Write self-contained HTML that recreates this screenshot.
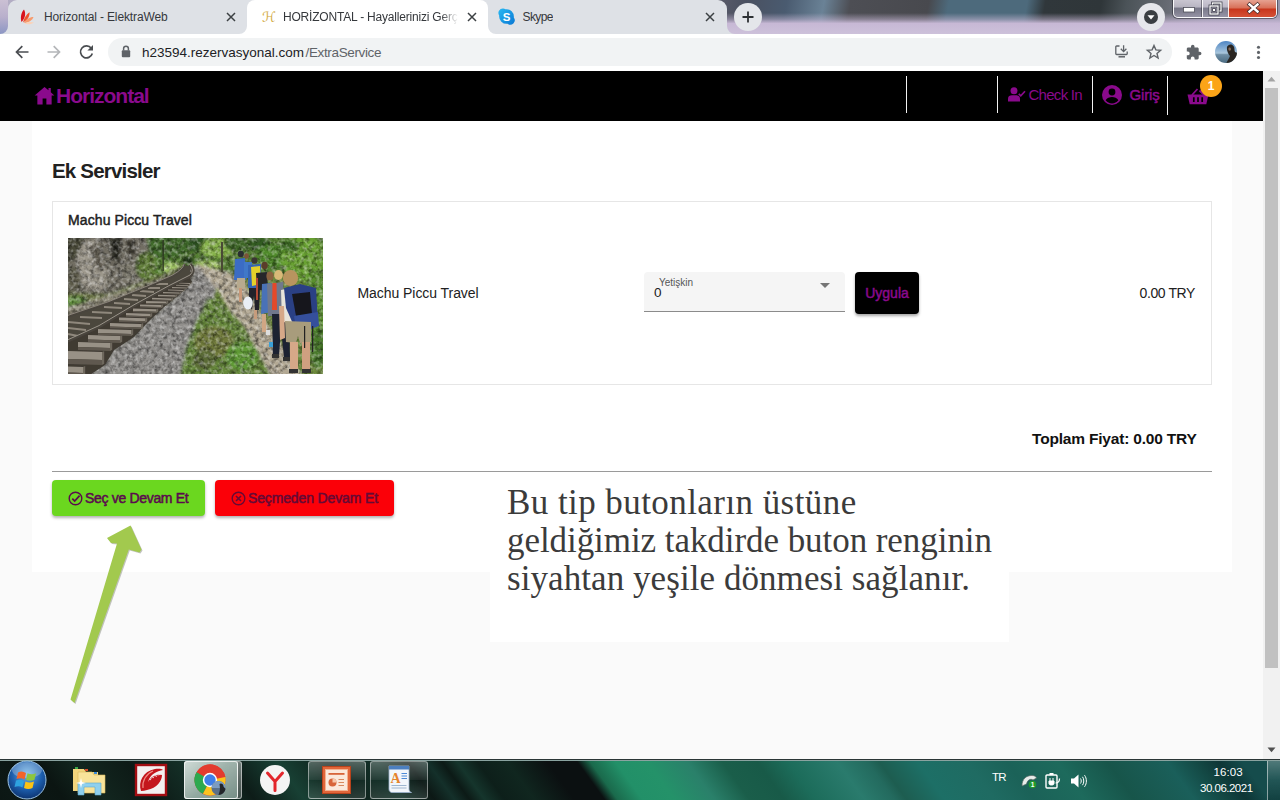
<!DOCTYPE html>
<html lang="tr">
<head>
<meta charset="utf-8">
<title>HORİZONTAL - Hayallerinizi Gerçekleştirin</title>
<style>
*{box-sizing:border-box;margin:0;padding:0}
html,body{width:1280px;height:800px;overflow:hidden;background:#fafafa;font-family:"Liberation Sans",sans-serif;}
.abs{position:absolute}
#screen{position:relative;width:1280px;height:800px;overflow:hidden}
svg{display:block;overflow:visible}
/* ---------- title bar / tabs ---------- */
#titlebar{left:0;top:0;width:1280px;height:34px;background:
 linear-gradient(100deg,#cfc6d6 0px,#b3adc4 8px,#8c86a0 200px,#6f6b80 420px,#5d5d6b 700px,#4a5060 735px,#4a5b70 775px,#6a8296 812px,#4d4e54 838px,#48494e 915px,#4d6a7c 935px,#4d6a7c 1012px,#30373b 1030px,#2f3639 1085px,#4b5358 1110px,#666a72 1150px,#85879a 1190px,#9a98ad 1280px);}
#titleglow{left:0;top:13px;width:1280px;height:21px;background:linear-gradient(180deg,rgba(199,184,213,0) 0,rgba(199,184,213,.5) 30%,rgba(199,184,213,1) 50%,rgba(205,193,218,1) 100%)}
#tl{left:0;top:0;width:8px;height:34px;background:linear-gradient(180deg,#cbc0d4 0,#b9b0cc 50%,#8c96c4 100%)}
#tabstrip{left:8px;top:0;width:719px;height:34px;background:#dee1e6;border-radius:9px 9px 0 0}
.flare{width:8px;height:8px;top:26px}
.tab{top:0;height:34px;white-space:nowrap}
.tab.active{background:#fff;border-radius:8px 8px 0 0}
.tab .t{position:absolute;left:36px;top:10px;font-size:12px;color:#35383c;overflow:hidden}
.tab svg.x{position:absolute;right:11px;top:12px}
#toolbar{left:0;top:34px;width:1280px;height:37px;background:#fff}
#omni{left:108px;top:38px;width:1064px;height:28px;border-radius:14px;background:#f1f3f4}
#url{left:142px;top:45px;font-size:13.5px;color:#202124;white-space:nowrap}
#url span{color:#5f6368;letter-spacing:-.37px;margin-left:1.5px}
/* ---------- page ---------- */
#header{left:0;top:71px;width:1263px;height:50px;background:#000}
.vdiv{top:76px;width:1px;height:37px;background:#f2f2f2}
#brand{left:56px;top:84px;font-size:21px;font-weight:bold;color:#8a0a8c;letter-spacing:-1.0px;white-space:nowrap}
.nav{top:86px;font-size:15px;color:#8a0a8c;white-space:nowrap}
#container{left:32px;top:121px;width:1200px;height:451px;background:#fff}
#h1{left:52px;top:159px;font-size:20.5px;font-weight:bold;color:#212121;letter-spacing:-.8px;white-space:nowrap}
#card{left:52px;top:201px;width:1160px;height:184px;border:1px solid #e6e6e6;background:#fff}
#cardtitle{left:68px;top:212px;font-size:14px;color:#212121;-webkit-text-stroke:.45px #212121;white-space:nowrap;letter-spacing:.1px}
#photo{left:68px;top:238px;width:255px;height:136px;overflow:hidden}
#svcname{left:357.500px;top:285px;font-size:14px;color:#212121;white-space:nowrap;letter-spacing:-.06px}
#select{left:644px;top:272px;width:201px;height:40px;background:#f5f5f5;border-bottom:1px solid #8b8b8b;border-radius:4px 4px 0 0}
#select .lbl{position:absolute;left:15px;top:5px;font-size:10px;color:#555;letter-spacing:.0px}
#select .val{position:absolute;left:10px;top:13px;font-size:13.5px;color:#212121}
#select .car{position:absolute;left:176px;top:11px;width:0;height:0;border-left:5px solid transparent;border-right:5px solid transparent;border-top:5px solid #757575}
#uygula{left:855px;top:272px;width:64px;height:42px;background:#000;border-radius:4px;box-shadow:0 2px 3px rgba(0,0,0,.35);color:#8a0a8c;-webkit-text-stroke:.5px #8a0a8c;font-size:14px;text-align:center;line-height:42px;letter-spacing:0}
#price{left:1139.5px;top:285px;font-size:14px;color:#212121;white-space:nowrap;letter-spacing:-.4px}
#total{left:1032px;top:430px;font-size:15.5px;font-weight:bold;color:#111;white-space:nowrap;letter-spacing:-.19px}
#hr{left:52px;top:471px;width:1160px;height:1px;background:#9a9a9a}
.btn{top:480px;height:36px;border-radius:4px;box-shadow:0 2px 3px rgba(0,0,0,.3);font-size:14px;white-space:nowrap}
#b1{left:52px;width:153px;background:#6bd71f;color:#5b0a4e;-webkit-text-stroke:.5px #5b0a4e}
#b2{left:215px;width:179px;background:#fb0008;color:#650a36;-webkit-text-stroke:.5px #650a36}
.btn span{position:absolute;top:10px}
#note{left:490px;top:480px;width:519px;height:162px;background:#fff}
#notetext{left:507px;top:484px;font-family:"Liberation Serif",serif;font-size:35px;line-height:38px;color:#3b3b3b;white-space:nowrap}
/* scrollbar */
#sb{left:1263px;top:71px;width:17px;height:688px;background:#f1f1f1}
#sbthumb{left:1265px;top:88px;width:13px;height:580px;background:#c1c1c1}
/* ---------- taskbar ---------- */
#taskbar{left:0;top:759px;width:1280px;height:41px;background:#0b1512;overflow:hidden}
#tbg{left:-60px;top:0;width:1400px;height:41px;transform:skewX(36deg);background:linear-gradient(90deg,#0a1310 0px,#0c1815 60px,#0b1512 110px,#12261f 150px,#0d1a16 200px,#153229 260px,#0d1c18 300px,#184034 350px,#0f221c 400px,#123028 450px,#0c1815 480px,#14302a 500px,#0c1a16 515px,#15352c 530px,#0d1f1a 550px,#10261f 580px,#0b1011 620px,#0b1011 650px,#1a6a4c 663px,#229068 688px,#249269 720px,#2a806a 760px,#1a5e4a 795px,#185a48 830px,#1c6c5a 860px,#2a7b6d 910px,#236a5e 940px,#1d5d50 952px,#1d6f66 990px,#1f6b62 1040px,#1b6258 1080px,#1d6a5c 1130px,#17554a 1180px,#195a52 1210px,#1a5f5a 1240px,#134844 1270px,#0e3636 1292px,#154c4c 1315px,#154c4c 1400px)}
#tbtop{left:0;top:759px;width:1280px;height:2px;background:linear-gradient(180deg,#2b3636 0,#2b3636 50%,#8aa3a0 50%,#8aa3a0 100%)}
.tbbtn{top:761px;height:38px;border-radius:3px;border:1px solid rgba(255,255,255,.45);background:linear-gradient(180deg,rgba(255,255,255,.28),rgba(255,255,255,.08) 50%,rgba(255,255,255,.02) 51%,rgba(255,255,255,.12))}
.tray{color:#fff;font-size:12px;white-space:nowrap}
</style>
</head>
<body>
<div id="screen">

<!-- TITLE BAR -->
<div id="titlebar" class="abs"></div>
<div id="titleglow" class="abs"></div>
<div id="tl" class="abs"></div>
<div id="tabstrip" class="abs"></div>
<svg class="abs flare" style="left:0px" viewBox="0 0 8 8"><path d="M8 0V8H0A8 8 0 0 0 8 0Z" fill="#dee1e6"/></svg>
<svg class="abs flare" style="left:727px" viewBox="0 0 8 8"><path d="M0 0V8H8A8 8 0 0 1 0 0Z" fill="#dee1e6"/></svg>

<div class="tab abs" style="left:8px;width:239px">
 <svg class="abs" style="left:12px;top:9px" width="15" height="16" viewBox="0 0 15 16"><path d="M1.500 13C0 8 1.500 3 4 0.500C6 4 5.500 9 1.500 13Z" fill="#d8121c"/><path d="M3 13.500C4 9 6.500 5 9.500 3.200C10 7 7.500 11 3 13.500Z" fill="#f0522e"/><path d="M4 14C6 10.500 9.500 8 13.500 8C12.500 11 9 13.500 4 14Z" fill="#f79a6c"/><path d="M4.500 14.500C7 12.800 11 12.500 14 13.500C11.500 15.500 7.500 15.800 4.500 14.500Z" fill="#fbd2b8"/></svg>
 <span class="t" style="letter-spacing:-.13px">Horizontal - ElektraWeb</span>
 <svg class="x" width="10" height="10" viewBox="0 0 10 10"><path d="M1 1L9 9M9 1L1 9" stroke="#3c4043" stroke-width="1.500" fill="none"/></svg>
</div>
<div class="tab active abs" style="left:247px;width:241px">
 <span class="abs" style="left:15px;top:8px;font-family:'DejaVu Sans','Liberation Serif',serif;font-size:14px;color:#d2a93c;line-height:18px">ℋ</span>
 <span class="t" style="width:175px;letter-spacing:-.2px;-webkit-mask-image:linear-gradient(90deg,#000 0,#000 158px,transparent 175px);mask-image:linear-gradient(90deg,#000 0,#000 158px,transparent 175px)">HORİZONTAL - Hayallerinizi Gerçekleştirin</span>
 <svg class="x" width="10" height="10" viewBox="0 0 10 10"><path d="M1 1L9 9M9 1L1 9" stroke="#3c4043" stroke-width="1.500" fill="none"/></svg>
</div>
<svg class="abs flare" style="left:239px" viewBox="0 0 8 8"><path d="M8 0V8H0A8 8 0 0 0 8 0Z" fill="#fff"/></svg>
<svg class="abs flare" style="left:488px" viewBox="0 0 8 8"><path d="M0 0V8H8A8 8 0 0 1 0 0Z" fill="#fff"/></svg>
<div class="tab abs" style="left:488px;width:238px">
 <svg class="abs" style="left:10px;top:8px" width="17" height="17" viewBox="0 0 17 17"><defs><linearGradient id="sk" x1="0" y1="0" x2="1" y2="1"><stop offset="0" stop-color="#28b8f2"/><stop offset="1" stop-color="#0a78d4"/></linearGradient></defs><path d="M5 0.500A4.500 4.500 0 0 1 7.500 1.200A7.500 7.500 0 0 1 15.800 9.500A4.500 4.500 0 0 1 9.500 15.800A7.500 7.500 0 0 1 1.200 7.500A4.500 4.500 0 0 1 5 0.500Z" fill="url(#sk)"/><text x="8.500" y="12.600" font-family="Liberation Sans, sans-serif" font-weight="bold" font-size="11.500" fill="#fff" text-anchor="middle">S</text></svg>
 <span class="t" style="left:34.5px;letter-spacing:-.6px">Skype</span>
 <svg class="x" width="10" height="10" viewBox="0 0 10 10"><path d="M1 1L9 9M9 1L1 9" stroke="#3c4043" stroke-width="1.500" fill="none"/></svg>
</div>
<!-- new tab button -->
<div class="abs" style="left:734px;top:3px;width:28px;height:28px;border-radius:14px;background:#e4e6ea"></div>
<svg class="abs" style="left:742px;top:11px" width="12" height="12" viewBox="0 0 12 12"><path d="M6 0.500V11.500M0.500 6H11.500" stroke="#2d3033" stroke-width="1.800" fill="none"/></svg>
<!-- tab search -->
<div class="abs" style="left:1137px;top:3px;width:28px;height:28px;border-radius:14px;background:#e6e7eb"></div>
<div class="abs" style="left:1144px;top:10px;width:14px;height:14px;border-radius:7px;background:#3a3e42"></div>
<svg class="abs" style="left:1147px;top:15px" width="8" height="5" viewBox="0 0 8 5"><path d="M0.500 0.300H7.500L4 4.600Z" fill="#fff"/></svg>
<!-- window controls -->
<div class="abs" style="left:1173px;top:-2px;width:104px;height:20px;border:1px solid rgba(255,255,255,.9);border-radius:0 0 5px 5px;box-shadow:0 0 0 1px rgba(40,40,50,.55);overflow:hidden;background:linear-gradient(180deg,rgba(220,215,225,.85) 0,rgba(200,195,208,.8) 45%,rgba(120,118,135,.75) 50%,rgba(150,148,165,.8) 100%)">
 <div class="abs" style="left:28px;top:0;width:1px;height:20px;background:rgba(255,255,255,.9);box-shadow:-1px 0 0 rgba(40,40,50,.5)"></div>
 <div class="abs" style="left:54px;top:0;width:50px;height:20px;background:linear-gradient(180deg,#e8a898 0,#d87058 45%,#c8361c 50%,#d8583c 100%);border-left:1px solid rgba(255,255,255,.9)"></div>
</div>
<svg class="abs" style="left:1183px;top:7px" width="12" height="6" viewBox="0 0 12 6"><rect x="0.500" y="0.500" width="11" height="4.500" fill="#fff" stroke="#50505a" stroke-width=".8"/></svg>
<svg class="abs" style="left:1209px;top:2px" width="13" height="13" viewBox="0 0 13 13"><rect x="3.500" y="1" width="8.500" height="8" fill="none" stroke="#3c3c48" stroke-width="2.800"/><rect x="3.500" y="1" width="8.500" height="8" fill="none" stroke="#fff" stroke-width="1.300"/><rect x="1" y="4" width="8" height="8" fill="#a9a5b8" stroke="#3c3c48" stroke-width="2.800"/><rect x="1" y="4" width="8" height="8" fill="none" stroke="#fff" stroke-width="1.300"/><rect x="3.600" y="6.600" width="2.800" height="2.800" fill="#fff" stroke="#3c3c48" stroke-width=".8"/></svg>
<svg class="abs" style="left:1247px;top:3px" width="13" height="10" viewBox="0 0 13 10"><path d="M2.500 1.500L10.500 8.500M10.500 1.500L2.500 8.500" stroke="#4a3030" stroke-width="4" stroke-linecap="square"/><path d="M2.500 1.500L10.500 8.500M10.500 1.500L2.500 8.500" stroke="#fff" stroke-width="2.400" stroke-linecap="square"/></svg>

<div id="toolbar" class="abs"></div>
<div id="omni" class="abs"></div>
<!-- nav icons -->
<svg class="abs" style="left:15px;top:45px" width="14" height="14" viewBox="0 0 14 14"><path d="M13.500 7H1.800M7.300 1.200L1.500 7L7.300 12.800" stroke="#4a4d51" stroke-width="1.700" fill="none"/></svg>
<svg class="abs" style="left:47px;top:45px" width="14" height="14" viewBox="0 0 14 14"><path d="M0.500 7H12.200M6.700 1.200L12.500 7L6.700 12.800" stroke="#b4b6b9" stroke-width="1.700" fill="none"/></svg>
<svg class="abs" style="left:79px;top:44px" width="15" height="16" viewBox="0 0 15 16"><path d="M12.300 4.200A6 6 0 1 0 13.300 9.500" stroke="#4a4d51" stroke-width="1.700" fill="none"/><path d="M14 1V6.600H8.400Z" fill="#4a4d51"/></svg>
<svg class="abs" style="left:121px;top:45px" width="10" height="13" viewBox="0 0 10 13"><path d="M2.600 5.500V3.600A2.400 2.400 0 0 1 7.400 3.600V5.500" stroke="#5f6368" stroke-width="1.500" fill="none"/><rect x="0.800" y="5.200" width="8.400" height="7" rx="1" fill="#5f6368"/></svg>
<div id="url" class="abs">h23594.rezervasyonal.com<span>/ExtraService</span></div>
<!-- install -->
<svg class="abs" style="left:1115px;top:45px" width="14" height="13" viewBox="0 0 14 13"><path d="M4.500 1H1.600A.8 .8 0 0 0 .8 1.800V8.700A.8 .8 0 0 0 1.600 9.500H11.400A.8 .8 0 0 0 12.200 8.700V6.500" stroke="#5f6368" stroke-width="1.300" fill="none"/><path d="M3.500 11.800H10" stroke="#5f6368" stroke-width="1.500"/><path d="M8.600 0.300V6.200M5.800 3.800L8.600 6.600L11.400 3.800" stroke="#5f6368" stroke-width="1.300" fill="none"/></svg>
<!-- star -->
<svg class="abs" style="left:1146px;top:44px" width="16" height="15" viewBox="0 0 16 15"><path d="M8 1.600L9.900 5.900L14.600 6.300L11 9.400L12.100 14L8 11.500L3.900 14L5 9.400L1.400 6.300L6.100 5.900Z" stroke="#5f6368" stroke-width="1.400" fill="none" stroke-linejoin="miter"/></svg>
<!-- puzzle -->
<svg class="abs" style="left:1186px;top:44px" width="16" height="16" viewBox="0 0 16 16"><path d="M13.700 7.700H12.700V4.900C12.700 4.100 12.100 3.500 11.300 3.500H8.500V2.500A1.750 1.750 0 0 0 5 2.500V3.500H2.200C1.400 3.500 0.800 4.100 0.800 4.900V7.500H1.800A1.900 1.900 0 0 1 1.800 11.300H0.800V14C0.800 14.800 1.400 15.400 2.200 15.400H4.800V14.400A1.900 1.900 0 0 1 8.600 14.400V15.400H11.300C12.100 15.400 12.700 14.800 12.700 14V11.200H13.700A1.750 1.750 0 0 0 13.700 7.700Z" fill="#5f6368"/></svg>
<!-- avatar -->
<svg class="abs" style="left:1215px;top:41px" width="22" height="22" viewBox="0 0 22 22"><defs><clipPath id="av"><circle cx="11" cy="11" r="11"/></clipPath><linearGradient id="avg" x1="0" y1="0" x2="0" y2="1"><stop offset="0" stop-color="#4f86c4"/><stop offset=".55" stop-color="#a9c6dc"/><stop offset=".62" stop-color="#6f8fa6"/><stop offset="1" stop-color="#4a6a80"/></linearGradient></defs><g clip-path="url(#av)"><rect width="22" height="22" fill="url(#avg)"/><path d="M12 6C13 3 17 2.500 18.500 5C20 7 19 9 20 11L23 12V23H11C12 20 14 18 15 15C13 13 11.500 9 12 6Z" fill="#2a2622"/><path d="M13.500 7C14.500 6 16 6.500 16 8.500C15.500 10 14 10 13.500 9Z" fill="#8a6a54"/></g></svg>
<!-- menu dots -->
<svg class="abs" style="left:1256px;top:45px" width="5" height="15" viewBox="0 0 5 15"><circle cx="2.500" cy="2.300" r="1.550" fill="#5f6368"/><circle cx="2.500" cy="7.400" r="1.550" fill="#5f6368"/><circle cx="2.500" cy="12.500" r="1.550" fill="#5f6368"/></svg>

<!-- PAGE -->
<div id="header" class="abs"></div>
<div class="vdiv abs" style="left:906px"></div>
<div class="vdiv abs" style="left:997px"></div>
<div class="vdiv abs" style="left:1092px"></div>
<div class="vdiv abs" style="left:1167px;height:39px"></div>
<svg class="abs" style="left:33.500px;top:86px" width="21" height="19" viewBox="0 0 20 18"><path d="M10 0.800L0.600 9H3.200V17.500H8.200V11.800H11.800V17.500H16.800V9H19.400L16 6V1.800H13.800V4.100Z" fill="#8a0a8c"/></svg>
<div id="brand" class="abs">Horizontal</div>
<svg class="abs" style="left:1008px;top:87px" width="18" height="15" viewBox="0 0 18 15"><circle cx="6" cy="3.800" r="3.500" fill="#8a0a8c"/><path d="M0 14.500V11.500C0 9.300 1.800 8.300 4 8.300H8C10.200 8.300 12 9.300 12 11.500V14.500Z" fill="#8a0a8c"/><path d="M10.800 6.800L12.800 8.800L17 4.200" stroke="#8a0a8c" stroke-width="1.700" fill="none"/></svg>
<div class="nav abs" style="left:1028.500px;letter-spacing:-.72px">Check In</div>
<svg class="abs" style="left:1102px;top:85px" width="20" height="20" viewBox="0 0 20 20"><circle cx="10" cy="10" r="10" fill="#8a0a8c"/><circle cx="10" cy="7" r="3.400" fill="#000"/><path d="M3.600 15.200C5 12.800 7.400 12 10 12C12.600 12 15 12.800 16.400 15.200A7.900 7.900 0 0 1 3.600 15.200Z" fill="#000"/></svg>
<div class="nav abs" style="left:1129.500px;-webkit-text-stroke:.5px #8a0a8c;letter-spacing:-.17px">Giriş</div>
<svg class="abs" style="left:1187px;top:88px" width="22" height="17" viewBox="0 0 22 17"><path d="M0.500 6.500H21.500L19.300 16.200H2.700Z" fill="#8a0a8c"/><path d="M5 7L10.500 1M17 7L12.500 2.500" stroke="#8a0a8c" stroke-width="1.800" fill="none"/><path d="M6.800 9.300V14M11 9.300V14M15.200 9.300V14" stroke="#000" stroke-width="1.700"/></svg>
<div class="abs" style="left:1200px;top:75px;width:22px;height:22px;border-radius:11px;background:#fba418;color:#fff;font-size:12px;font-weight:bold;text-align:center;line-height:22px">1</div>

<div id="container" class="abs"></div>
<div id="h1" class="abs">Ek Servisler</div>
<div id="card" class="abs"></div>
<div id="cardtitle" class="abs">Machu Piccu Travel</div>
<div id="photo" class="abs">
<svg width="255" height="136" viewBox="0 0 255 136" style="display:block">
<defs>
<filter id="pb" x="-5%" y="-5%" width="110%" height="110%"><feGaussianBlur stdDeviation="0.7"/></filter>
<filter id="pb2" x="-10%" y="-10%" width="120%" height="120%"><feGaussianBlur stdDeviation="1.6"/></filter>
<filter id="nz" x="0" y="0" width="100%" height="100%"><feTurbulence type="fractalNoise" baseFrequency="0.22" numOctaves="3" seed="7" result="n"/><feColorMatrix type="matrix" values="0 0 0 0 0  0 0 0 0 0  0 0 0 0 0  2.2 0 0 0 -0.9"/></filter>
<filter id="nzw" x="0" y="0" width="100%" height="100%"><feTurbulence type="fractalNoise" baseFrequency="0.25" numOctaves="3" seed="23" result="n"/><feColorMatrix type="matrix" values="0 0 0 0 1  0 0 0 0 1  0 0 0 0 1  0 2.2 0 0 -0.95"/></filter>
<clipPath id="pc"><rect width="255" height="136"/></clipPath>
</defs>
<g clip-path="url(#pc)">
<rect width="255" height="136" fill="#6d8a3c"/>
<g filter="url(#pb2)">
 <!-- foliage -->
 <rect x="60" y="-4" width="200" height="40" fill="#557f30"/><ellipse cx="128" cy="6" rx="12" ry="8" fill="#2f5522"/><ellipse cx="190" cy="6" rx="12" ry="7" fill="#335c24"/>
 <ellipse cx="100" cy="8" rx="22" ry="12" fill="#3f6a2a"/>
 <ellipse cx="150" cy="10" rx="18" ry="10" fill="#86b24a"/>
 <ellipse cx="170" cy="6" rx="14" ry="8" fill="#3e6628"/>
 <ellipse cx="205" cy="18" rx="16" ry="12" fill="#4f8a2c"/>
 <ellipse cx="235" cy="20" rx="22" ry="24" fill="#69a232"/><ellipse cx="222" cy="8" rx="10" ry="6" fill="#3f6f28"/>
 <ellipse cx="247" cy="70" rx="12" ry="40" fill="#5a902e"/><ellipse cx="250" cy="110" rx="8" ry="20" fill="#4a7a2a"/>
 <ellipse cx="120" cy="22" rx="6" ry="4" fill="#23381c"/>
 <ellipse cx="104" cy="30" rx="10" ry="5" fill="#a9cf6a"/>
 <ellipse cx="140" cy="28" rx="14" ry="5" fill="#9fbf62"/>
 <!-- rock -->
 <polygon points="-4,-4 78,-4 84,30 78,44 40,60 -4,70" fill="#726e63"/>
 <polygon points="8,6 28,2 40,38 34,54 14,48" fill="#9c978b"/><polygon points="22,8 30,6 36,30 30,34" fill="#5e5a50"/><polygon points="0,28 10,30 14,50 0,54" fill="#5b5a48"/>
 <polygon points="40,0 54,0 52,24 44,22" fill="#2f2d26"/>
 <polygon points="58,2 68,2 66,18 60,16" fill="#3d3a32"/>
 <polygon points="-2,-2 18,-2 8,20 -2,26" fill="#4a4a38"/>
 <polygon points="54,24 66,26 70,44 56,44" fill="#7a776b"/>
 <ellipse cx="78" cy="28" rx="10" ry="14" fill="#5d7a36"/>
 <!-- left ground -->
 <polygon points="-4,54 40,56 90,38 116,26 112,38 40,66 -4,82" fill="#6f7a4c"/>
 <ellipse cx="8" cy="66" rx="12" ry="8" fill="#5e8c3a"/>
 <polygon points="-4,70 60,52 100,38 100,44 -4,84" fill="#8f8a78"/>
 <!-- gravel -->
 <polygon points="122,28 132,28 150,44 146,60 130,84 120,110 114,140 16,140 36,126 45,112 64,100 78,85 95,70 110,58 122,44 127,34" fill="#918f8c"/>
 <!-- dirt path -->
 <polygon points="128,26 160,34 176,44 196,80 236,140 186,140 170,100 160,70 150,52" fill="#b3a994"/>
 <!-- grass island -->
 <polygon points="140,60 152,62 176,88 204,140 112,140 118,110 128,84" fill="#66883a"/>
 <ellipse cx="146" cy="104" rx="20" ry="16" fill="#6f7a3a"/><ellipse cx="136" cy="122" rx="12" ry="10" fill="#5a6a34"/>
 <ellipse cx="174" cy="118" rx="16" ry="14" fill="#5f9a34"/>
 <!-- track bed -->
 <polygon points="-4,78 41,64 80,48 104,38 116,28 124,28 127,34 122,44 110,58 95,70 78,85 64,100 45,112 36,126 16,140 -4,140" fill="#4f4a41"/>
</g>
<rect width="255" height="136" filter="url(#nz)" opacity=".55"/>
<rect width="255" height="136" filter="url(#nzw)" opacity=".45"/>
<g filter="url(#pb)">
 <!-- sleepers -->
 <polygon points="-4,104 31,89 66,68 101,48.7 122,40 124,44 112,56 96,69 80,84 66,99 46,112 37,127 17,140 -4,140" fill="#3f3a33"/>
 <polygon points="0,113 34,114.0 34,122.0 0,121" fill="#989186"/>
 <polygon points="0,121 34,122.0 34,127.0 0,126" fill="#5f594f"/>
 <polygon points="34,114.0 36.2,113.2 36.2,125.8 34,127.0" fill="#6e685d"/>
 <polygon points="0,128.5 15,128.9 15,134.9 0,134.5" fill="#989186"/>
 <polygon points="0,134.5 15,134.9 15,137.4 0,137" fill="#5f594f"/>
 <polygon points="15,128.9 17.2,128.1 17.2,136.2 15,137.4" fill="#6e685d"/>
 <polygon points="10,104 42,105.0 42,110.0 10,109" fill="#989186"/>
 <polygon points="10,109 42,110.0 42,113.0 10,112" fill="#5f594f"/>
 <polygon points="42,105.0 44.2,104.2 44.2,111.8 42,113.0" fill="#6e685d"/>
 <polygon points="20,97 52,98.0 52,102.5 20,101.5" fill="#989186"/>
 <polygon points="20,101.5 52,102.5 52,105.0 20,104" fill="#5f594f"/>
 <polygon points="52,98.0 54.2,97.2 54.2,103.8 52,105.0" fill="#6e685d"/>
 <polygon points="30,91 63,92.0 63,96.0 30,95" fill="#989186"/>
 <polygon points="30,95 63,96.0 63,98.0 30,97" fill="#5f594f"/>
 <polygon points="63,92.0 65.2,91.2 65.2,96.8 63,98.0" fill="#6e685d"/>
 <polygon points="42,85 73,85.9 73,89.4 42,88.5" fill="#989186"/>
 <polygon points="42,88.5 73,89.4 73,91.1 42,90.2" fill="#5f594f"/>
 <polygon points="73,85.9 75.2,85.1 75.2,89.9 73,91.1" fill="#6e685d"/>
 <polygon points="51,79.5 77,80.3 77,83.3 51,82.5" fill="#989186"/>
 <polygon points="51,82.5 77,83.3 77,84.8 51,84" fill="#5f594f"/>
 <polygon points="77,80.3 79.2,79.5 79.2,83.6 77,84.8" fill="#6e685d"/>
 <polygon points="58,75 82,75.7 82,78.2 58,77.5" fill="#989186"/>
 <polygon points="58,77.5 82,78.2 82,79.5 58,78.8" fill="#5f594f"/>
 <polygon points="82,75.7 84.2,74.9 84.2,78.3 82,79.5" fill="#6e685d"/>
 <polygon points="65,70.5 88,71.2 88,73.7 65,73" fill="#989186"/>
 <polygon points="65,73 88,73.7 88,74.9 65,74.2" fill="#5f594f"/>
 <polygon points="88,71.2 90.2,70.4 90.2,73.7 88,74.9" fill="#6e685d"/>
 <polygon points="72,66.5 93,67.1 93,69.1 72,68.5" fill="#989186"/>
 <polygon points="72,68.5 93,69.1 93,70.2 72,69.6" fill="#5f594f"/>
 <polygon points="93,67.1 95.2,66.3 95.2,69.0 93,70.2" fill="#6e685d"/>
 <polygon points="78,63 98,63.6 98,65.6 78,65" fill="#989186"/>
 <polygon points="78,65 98,65.6 98,66.5 78,65.9" fill="#5f594f"/>
 <polygon points="98,63.6 100.2,62.8 100.2,65.3 98,66.5" fill="#6e685d"/>
 <polygon points="84,59.8 103,60.4 103,62.1 84,61.5" fill="#989186"/>
 <polygon points="84,61.5 103,62.1 103,62.9 84,62.3" fill="#5f594f"/>
 <polygon points="103,60.4 105.2,59.6 105.2,61.7 103,62.9" fill="#6e685d"/>
 <polygon points="90,56.8 107,57.3 107,58.8 90,58.3" fill="#989186"/>
 <polygon points="90,58.3 107,58.8 107,59.5 90,59" fill="#5f594f"/>
 <polygon points="107,57.3 109.2,56.5 109.2,58.3 107,59.5" fill="#6e685d"/>
 <polygon points="95,54 111,54.5 111,55.8 95,55.3" fill="#989186"/>
 <polygon points="95,55.3 111,55.8 111,56.4 95,55.9" fill="#5f594f"/>
 <polygon points="111,54.5 113.2,53.7 113.2,55.2 111,56.4" fill="#6e685d"/>
 <polygon points="100,51.5 115,52.0 115,53.1 100,52.6" fill="#989186"/>
 <polygon points="100,52.6 115,53.1 115,53.6 100,53.1" fill="#5f594f"/>
 <polygon points="115,52.0 117.2,51.2 117.2,52.4 115,53.6" fill="#6e685d"/>
 <polygon points="104,49 118,49.4 118,50.4 104,50" fill="#989186"/>
 <polygon points="104,50 118,50.4 118,50.9 104,50.5" fill="#5f594f"/>
 <polygon points="118,49.4 120.2,48.6 120.2,49.7 118,50.9" fill="#6e685d"/>
 <polygon points="108,46.8 120,47.2 120,48.1 108,47.7" fill="#989186"/>
 <polygon points="108,47.7 120,48.1 120,48.5 108,48.1" fill="#5f594f"/>
 <polygon points="120,47.2 122.2,46.4 122.2,47.3 120,48.5" fill="#6e685d"/>
 <polygon points="111,44.8 122,45.1 122,45.9 111,45.6" fill="#989186"/>
 <polygon points="111,45.6 122,45.9 122,46.3 111,46" fill="#5f594f"/>
 <polygon points="122,45.1 124.2,44.3 124.2,45.1 122,46.3" fill="#6e685d"/>
 <polygon points="-2,79 41,64.500 80,48.700 104,38.300 116,28 122,28 122,38 101,48.700 66,68 31,89 -2,104" fill="#4b463e"/>
 <!-- ties between rails -->
 <g stroke="#8f887c" stroke-width="2">
 <line x1="0" y1="84" x2="22" y2="86"/><line x1="0" y1="90" x2="18" y2="92"/><line x1="0" y1="96" x2="10" y2="98"/>
 <line x1="12" y1="79" x2="34" y2="80"/><line x1="24" y1="74" x2="44" y2="75"/><line x1="36" y1="69" x2="54" y2="70"/>
 <line x1="46" y1="65" x2="62" y2="66"/><line x1="56" y1="61" x2="70" y2="62"/><line x1="64" y1="57" x2="78" y2="58"/>
 <line x1="72" y1="53" x2="86" y2="54"/><line x1="80" y1="50" x2="92" y2="50"/><line x1="88" y1="46" x2="100" y2="46"/>
 </g>
 <!-- rails -->
 <path d="M-2,79 L41,64.5 L80,48.7 L104,38.3 Q116,32 116.5,26" fill="none" stroke="#4a443c" stroke-width="2.4"/>
 <path d="M-2,78 L41,63.5 L80,47.7 L104,37.3 Q115.5,31 116,26" fill="none" stroke="#9a948a" stroke-width=".8"/>
 <path d="M-2,104 L31,89 L66,68 L101,48.7 L122,38 Q128,33 122,26" fill="none" stroke="#4a443c" stroke-width="3"/>
 <path d="M-2,102.6 L31,87.6 L66,66.8 L101,47.6 L122,37 Q127,32.5 121.5,26" fill="none" stroke="#a39d92" stroke-width=".9"/>
 <!-- lamp post / tree trunk -->
 <rect x="94.5" y="2" width="1.3" height="31" fill="#2c3322"/>
 <rect x="153" y="4" width="2" height="30" fill="#4a4a36"/>
 <!-- hikers -->
 <g>
 <!-- 1 -->
 <ellipse cx="172.8" cy="16" rx="3" ry="3.2" fill="#2a2e33"/>
 <polygon points="167,21 177,20 178,42 166,42" fill="#3a6cc4"/>
 <rect x="169" y="40" width="8" height="11" fill="#b7aa8e"/>
 <rect x="171" y="50" width="3" height="14" fill="#c89878"/>
 <!-- 2 -->
 <ellipse cx="178.5" cy="18" rx="2.4" ry="2.8" fill="#7a5238"/>
 <polygon points="176,24 184,24 184,40 176,40" fill="#3f78c8"/>
 <!-- 3 -->
 <ellipse cx="186.5" cy="22.5" rx="3" ry="3.2" fill="#3b3532"/>
 <polygon points="180,27 193,26 193,50 180,50" fill="#3565b6"/>
 <polygon points="183,29 192,28 193,46 184,48" fill="#e4d02c"/>
 <polygon points="181,50 192,50 191,72 187,72 186,58 184,72 181,66" fill="#22242a"/>
 <ellipse cx="180" cy="65" rx="4.8" ry="6.5" fill="#e9eef5"/>
 <rect x="186" y="72" width="3" height="9" fill="#c79c7c"/>
 <!-- 4 -->
 <ellipse cx="196.6" cy="27.5" rx="3.2" ry="3.8" fill="#5a3e2c"/>
 <polygon points="188,35 199,34 200,52 189,52" fill="#26262c"/>
 <polygon points="188,40 190,40 190,62 188,62" fill="#b24a34"/>
 <!-- 5 -->
 <ellipse cx="202" cy="38" rx="3.6" ry="4.5" fill="#8a6240"/>
 <polygon points="194,46 203,45 204,74 193,76" fill="#4a72b8"/>
 <rect x="194" y="76" width="4" height="18" fill="#d0a684"/>
 <!-- 6 -->
 <ellipse cx="210.5" cy="37" rx="4.4" ry="5" fill="#d9b978"/>
 <polygon points="199,46 215,44 217,78 200,78" fill="#70788c"/>
 <polygon points="204.500,45 208.500,45 209,72 204,72" fill="#e4482a"/>
 <polygon points="204,76 221,76 222,120 216,120 213,90 211,118 205,118" fill="#1f2430"/>
 <!-- 7 -->
 <ellipse cx="222.500" cy="40" rx="7.600" ry="8" fill="#b8945e"/>
 <polygon points="213,52 232,48 236,86 214,84" fill="#e8e4da"/>
 <polygon points="216,50 232,46 248,50 250,84 240,90 226,88 218,70" fill="#2c3f84"/>
 <polygon points="224,56 242,54 244,76 228,78" fill="#16181e"/>
 <polygon points="226,78 250,74 251,88 240,92 228,90" fill="#34509c"/>
 <polygon points="217,83 243,84 243,104 232,105 230,98 228,105 218,104" fill="#a89c7c"/>
 <rect x="222" y="104" width="8" height="29" fill="#d6a888"/>
 <rect x="234" y="104" width="8" height="29" fill="#cfa080"/>
 <polygon points="211,68 216,68 217,100 212,102" fill="#d6a888"/>
 <rect x="244" y="88" width="1.200" height="26" fill="#222"/>
 <rect x="236" y="88" width="1.200" height="22" fill="#222"/>
 <rect x="221" y="131" width="9" height="4" fill="#333"/><rect x="234" y="131" width="9" height="4" fill="#333"/>
 <rect x="204" y="116" width="7" height="4" fill="#333"/><rect x="215" y="119" width="7" height="4" fill="#333"/>
 <rect x="198" y="92" width="4" height="5" fill="#ddd"/><rect x="201" y="104" width="4" height="5" fill="#3aa0d8"/>
 </g>
</g>
</g>
</svg>
</div>
<div id="svcname" class="abs">Machu Piccu Travel</div>
<div id="select" class="abs"><span class="lbl">Yetişkin</span><span class="val">0</span><span class="car"></span></div>
<div id="uygula" class="abs">Uygula</div>
<div id="price" class="abs">0.00 TRY</div>
<div id="total" class="abs">Toplam Fiyat: 0.00 TRY</div>
<div id="hr" class="abs"></div>
<div id="b1" class="btn abs"><svg class="abs" style="left:16px;top:11px" width="15" height="15" viewBox="0 0 15 15"><circle cx="7.500" cy="7.500" r="6.300" stroke="#5b0a4e" stroke-width="1.400" fill="none"/><path d="M4.300 7.600L6.700 10L11.600 4.600" stroke="#5b0a4e" stroke-width="1.700" fill="none"/></svg><span style="left:33px;letter-spacing:-.32px">Seç ve Devam Et</span></div>
<div id="b2" class="btn abs"><svg class="abs" style="left:15.500px;top:11px" width="15" height="15" viewBox="0 0 15 15"><circle cx="7.500" cy="7.500" r="6.300" stroke="#650a36" stroke-width="1.400" fill="none"/><path d="M5 5L10 10M10 5L5 10" stroke="#650a36" stroke-width="1.600" fill="none"/></svg><span style="left:33px;letter-spacing:-.14px">Seçmeden Devam Et</span></div>

<div id="note" class="abs"></div>
<div id="notetext" class="abs"><span style="letter-spacing:.43px">Bu tip butonların üstüne</span><br><span style="letter-spacing:-.06px">geldiğimiz takdirde buton renginin</span><br><span style="letter-spacing:.07px">siyahtan yeşile dönmesi sağlanır.</span></div>

<!-- arrow -->
<svg class="abs" style="left:0;top:0" width="1280" height="800" viewBox="0 0 1280 800"><path d="M131.500 526.500L142.500 550.500L140.500 553.500L129.800 550.500L75.500 704L71.500 700.500L118 544.500L112 544L108 539Z" fill="#8f9488" opacity=".55"/><path d="M130.500 525.500L141.500 549.500L139.500 552.500L128.800 549.500L74.500 703L70.500 699.500L117 543.500L111 543L107 538Z" fill="#a2c94e"/></svg>

<div id="sb" class="abs"></div>
<div id="sbthumb" class="abs"></div>
<svg class="abs" style="left:1267px;top:76px" width="9" height="6" viewBox="0 0 9 6"><path d="M0.500 5.500L4.500 0.800L8.500 5.500Z" fill="#a3a3a3"/></svg>
<svg class="abs" style="left:1267px;top:747px" width="9" height="6" viewBox="0 0 9 6"><path d="M0.500 0.500L4.500 5.200L8.500 0.500Z" fill="#505050"/></svg>

<!-- TASKBAR -->
<div id="taskbar" class="abs"><div id="tbg" class="abs"></div></div>
<div id="tbtop" class="abs"></div>
<!-- start orb -->
<svg class="abs" style="left:6px;top:760px" width="42" height="40" viewBox="0 0 42 40"><defs><radialGradient id="orb" cx=".5" cy=".35" r=".7"><stop offset="0" stop-color="#6fb4e8"/><stop offset=".55" stop-color="#1d5fae"/><stop offset="1" stop-color="#0a2c66"/></radialGradient></defs><circle cx="21" cy="20" r="19" fill="url(#orb)" stroke="#9cc4e4" stroke-width="1"/><ellipse cx="21" cy="10" rx="15" ry="8" fill="#fff" opacity=".25"/><path d="M12 12.500C15 11 17.500 11.500 20 13L18.500 19.500C16 18 13.500 17.800 10.500 19Z" fill="#f2642a"/><path d="M21.500 13.200C24 14.500 27 14.800 30 13.200L28.500 19.800C25.500 21.200 22.500 21 20 19.800Z" fill="#8cc63e"/><path d="M10 20.500C13 19.300 15.500 19.500 18 21L16.500 27.500C14 26 11.500 26 8.500 27Z" fill="#2ea3e0"/><path d="M19.500 21.500C22 22.800 25 23 28 21.500L26.500 28C23.500 29.500 20.500 29.200 18 28Z" fill="#fbc314"/></svg>
<!-- explorer -->
<svg class="abs" style="left:72px;top:765px" width="34" height="32" viewBox="0 0 34 32"><path d="M1 4H12L14 7H26V26H1Z" fill="#f2d57c"/><path d="M6 7H20L22 10H33V28H6Z" fill="#f8e39a" stroke="#d9b85a" stroke-width=".6"/><rect x="3" y="2" width="3" height="2" fill="#3aa648"/><rect x="13" y="4" width="3" height="2" fill="#d84a2a"/><rect x="22" y="7" width="3" height="2" fill="#3a8ad8"/><path d="M6 30V18H29V30H23V22H12V30Z" fill="#8fd0ee" stroke="#5aa9cf" stroke-width=".6"/><path d="M8 17L9 13L10 17L14 18L10 19L9 23L8 19L4 18Z" fill="#fff"/></svg>
<!-- red claw app -->
<svg class="abs" style="left:135px;top:764px" width="32" height="32" viewBox="0 0 32 32"><rect x="1" y="1" width="30" height="30" fill="#f4f0f0" stroke="#a30d12" stroke-width="2.400"/><path d="M6 27C3 18 8 7 20 5C24 4.300 27 5 28 6C22 7 15 10 13 18C16 12 22 10 27 11C27 17 22 24 12 26C10 26.500 8 27 6 27Z" fill="#c4161c"/><path d="M13 18L15 14.500L15.500 16.500L17.500 12.500L18 14.500L20.500 11L21 13L24 10.500L27 11C21 11 16 13 13 18Z" fill="#fff"/><path d="M8 24C7 17 11 10 18 7" stroke="#f08a84" stroke-width="1.200" fill="none"/></svg>
<!-- chrome button -->
<div class="abs" style="left:184px;top:761px;width:58px;height:38px;border-radius:3px;border:1px solid rgba(255,255,255,.5);background:linear-gradient(180deg,rgba(255,255,255,.42),rgba(255,255,255,.22))"></div>
<div class="abs tbbtn" style="left:184px;width:54px;border-color:rgba(255,255,255,.75);background:linear-gradient(135deg,rgba(235,245,240,.75),rgba(190,215,205,.62) 50%,rgba(160,190,180,.55))"></div>
<svg class="abs" style="left:194px;top:764px" width="34" height="34" viewBox="0 0 34 34"><circle cx="16" cy="16" r="15.500" fill="#e33b2e"/><path d="M16 16L2.600 8.200A15.500 15.500 0 0 0 9 29.800Z" fill="#2da94f"/><path d="M16 16L9 29.800A15.500 15.500 0 0 0 31.500 16.500L31.400 13Z" fill="#fcc31e"/><path d="M16 16L2.600 8.200A15.500 15.500 0 0 1 31.400 13H16Z" fill="#e33b2e"/><path d="M16 16L8.500 29.500A15.500 15.500 0 0 1 2.600 8.200Z" fill="#2da94f"/><circle cx="16" cy="16" r="7.200" fill="#fff"/><circle cx="16" cy="16" r="5.700" fill="#3f7fe8"/><circle cx="24.500" cy="24" r="7" fill="#5a7088"/><path d="M17.500 24A7 7 0 0 1 31.500 24Z" fill="#7d9cc0"/><path d="M25.500 20C27 18.500 29.500 20 29.500 22.500L31.500 25A7 7 0 0 1 24.500 31C25.500 28 26.500 26 25.500 20Z" fill="#23262a"/></svg>
<!-- yandex -->
<svg class="abs" style="left:260px;top:765px" width="30" height="30" viewBox="0 0 30 30"><circle cx="15" cy="15" r="15" fill="#f4f4f4"/><path d="M7.500 8L15 16.500L22.500 8M15 16V25.500" stroke="#e3262c" stroke-width="3" fill="none" stroke-linecap="round"/></svg>
<!-- powerpoint -->
<div class="abs tbbtn" style="left:308px;width:58px"></div>
<svg class="abs" style="left:322px;top:766px" width="30" height="28" viewBox="0 0 30 28"><rect x="0.500" y="0.500" width="28" height="27" fill="#e0663a" stroke="#b8431c" stroke-width="1"/><rect x="3.500" y="3.500" width="22" height="21" fill="#fbe9dc" stroke="#f4b290" stroke-width="1"/><rect x="6.500" y="7" width="16" height="1.800" fill="#d8653a"/><circle cx="10.500" cy="16.500" r="4" fill="#d8653a"/><path d="M10.500 16.500V12.500A4 4 0 0 1 14.500 16.500Z" fill="#f6c8ac"/><path d="M16.500 13.500H22M16.500 16.500H22M16.500 19.500H22" stroke="#d8895f" stroke-width="1.200"/></svg>
<!-- wordpad -->
<div class="abs tbbtn" style="left:370px;width:58px"></div>
<svg class="abs" style="left:387px;top:765px" width="25" height="29" viewBox="0 0 25 29"><path d="M2 1H22V24C22 26 23 27 24.500 27.500H4.500C3 27 2 26 2 24Z" fill="#f2f6fb" stroke="#9db4cf" stroke-width=".8"/><rect x="2" y="1" width="20" height="3.500" fill="#4c7fc0"/><text x="3.500" y="17.500" font-family="Liberation Serif, serif" font-weight="bold" font-size="14" fill="#e5842c">A</text><path d="M14.500 8.500H20M14.500 11H20M14.500 13.500H20" stroke="#4c8ad8" stroke-width="1.100"/><path d="M4.500 20.500H19.500M4.500 23H19.500" stroke="#9fb6d0" stroke-width="1.100"/></svg>
<!-- tray icons -->
<svg class="abs" style="left:1020px;top:773px" width="18" height="16" viewBox="0 0 18 16"><path d="M2 13C2 6 6 2.500 12 2.500C14.500 2.500 16 3.500 16.500 5L13 7C11 5.500 7.500 6.500 6.500 11Z" fill="#e8ecea" stroke="#5a6a66" stroke-width=".7"/><circle cx="12.500" cy="11.500" r="3.800" fill="#1f9a2e"/><text x="12.500" y="14" font-family="Liberation Sans, sans-serif" font-size="6.500" font-weight="bold" fill="#fff" text-anchor="middle">1</text></svg>
<svg class="abs" style="left:1045px;top:772px" width="16" height="17" viewBox="0 0 16 17"><rect x="1" y="3" width="11" height="13" rx="1" fill="none" stroke="#fff" stroke-width="1.400"/><rect x="4.500" y="1" width="4" height="2" fill="#fff"/><path d="M5 6V9M8 6V9M4 9H9V11.500C9 12.500 8 13 6.500 13C5 13 4 12.500 4 11.500Z" stroke="#fff" stroke-width="1" fill="#fff"/><path d="M10.500 11C13 11 14.500 9 14.500 6.500" stroke="#fff" stroke-width="1.200" fill="none"/></svg>
<svg class="abs" style="left:1070px;top:773px" width="17" height="16" viewBox="0 0 17 16"><path d="M1 5.500H4L8.500 1.500V14.500L4 10.500H1Z" fill="#fff"/><path d="M10.500 5.500C11.500 7 11.500 9 10.500 10.500M12.500 3.800C14.200 6 14.200 10 12.500 12.200M14.500 2.200C17 5.500 17 10.500 14.500 13.800" stroke="#fff" stroke-width="1" fill="none"/></svg>
<!-- show desktop -->
<div class="abs" style="left:1267px;top:761px;width:13px;height:39px;border-left:1px solid rgba(255,255,255,.5);background:linear-gradient(180deg,rgba(255,255,255,.25),rgba(255,255,255,.05) 50%,rgba(0,0,0,.15))"></div>

<div class="tray abs" style="left:992px;top:771px;font-size:11.5px;letter-spacing:-.8px">TR</div>
<div class="tray abs" style="left:1213.500px;top:766px;font-size:11.5px;letter-spacing:.1px">16:03</div>
<div class="tray abs" style="left:1200px;top:782px;font-size:11.5px;letter-spacing:-.5px">30.06.2021</div>

</div>
</body>
</html>
